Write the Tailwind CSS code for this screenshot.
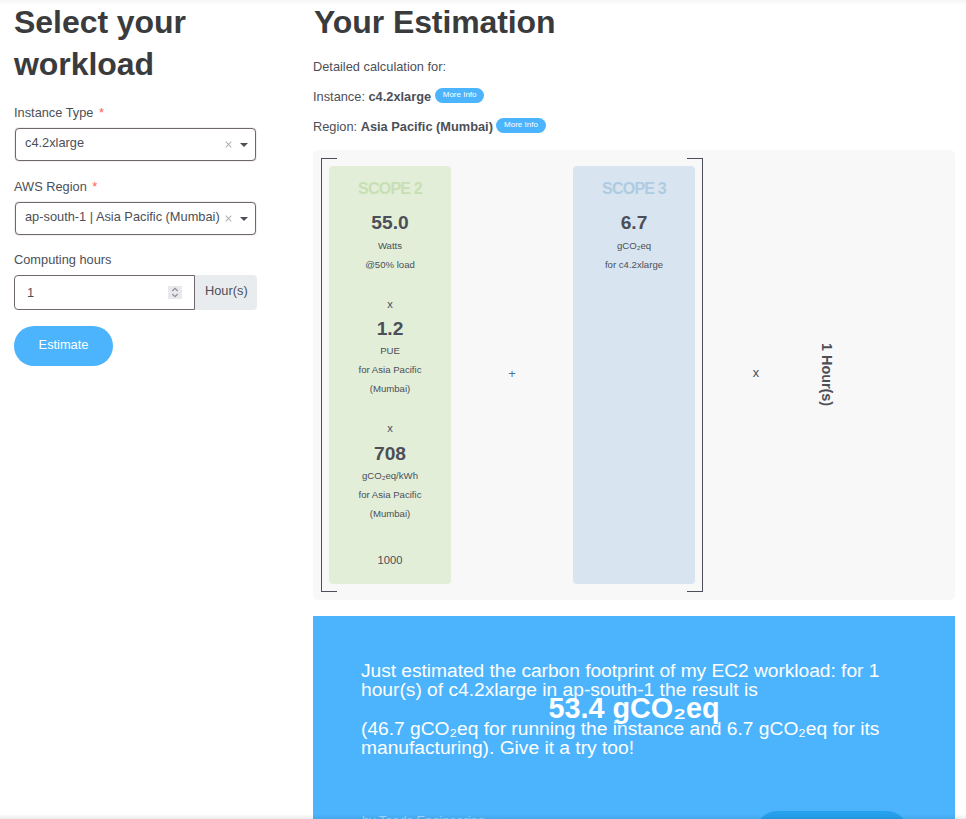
<!DOCTYPE html>
<html lang="en">
<head>
<meta charset="utf-8">
<title>Workload estimation</title>
<script src="https://cdn.jsdelivr.net/npm/@tailwindcss/browser@4"></script>
</head>
<body class="relative h-[819px] overflow-hidden bg-white font-['Liberation_Sans',Arial,sans-serif] text-[12.8px] leading-[20px] text-[#4c4f58]">
<div class="flex h-full">
  <aside class="w-[257px] shrink-0 pl-[14px] pt-px">
    <h1 class="text-[32px] leading-[42px] font-bold tracking-[-0.05px] text-[#3a3b3d]">Select your<br>workload</h1>
    <label class="mt-[18px] block">Instance Type <span class="ml-[2px] text-[#ff5b5b]">*</span></label>
    <div class="mt-[5px] ml-px flex h-[33px] w-[241px] items-center rounded-[4px] border border-[#6f676b] pl-[9px] pr-[7px] shadow-[0_0_1px_#6f676b]">
      <span class="mb-[3px] flex-1">c4.2xlarge</span>
      <svg class="mr-[8px] h-[7px] w-[7px]" viewBox="0 0 7 7" stroke="#b5b5b8" stroke-width="1.1"><path d="M.7.7l5.6 5.6M6.3.7L.7 6.3"/></svg>
      <svg class="h-[4px] w-[8px]" viewBox="0 0 8 4" fill="#4c4f58"><path d="M0 0h8L4 4z"/></svg>
    </div>
    <label class="mt-[16px] block">AWS Region <span class="ml-[2px] text-[#ff5b5b]">*</span></label>
    <div class="mt-[5px] ml-px flex h-[33px] w-[241px] items-center rounded-[4px] border border-[#6f676b] pl-[9px] pr-[7px] shadow-[0_0_1px_#6f676b]">
      <span class="mb-[4px] flex-1 whitespace-nowrap">ap-south-1 | Asia Pacific (Mumbai)</span>
      <svg class="mr-[8px] h-[7px] w-[7px] shrink-0" viewBox="0 0 7 7" stroke="#b5b5b8" stroke-width="1.1"><path d="M.7.7l5.6 5.6M6.3.7L.7 6.3"/></svg>
      <svg class="h-[4px] w-[8px] shrink-0" viewBox="0 0 8 4" fill="#4c4f58"><path d="M0 0h8L4 4z"/></svg>
    </div>
    <label class="mt-[15px] block">Computing hours</label>
    <div class="mt-[5px] flex h-[35px] w-[243px]">
      <div class="flex w-[181px] items-center rounded-l-[4px] border border-[#6f676b] pl-[12px] pr-[12px]">
        <span class="flex-1">1</span>
        <span class="flex h-[13px] w-[14px] items-center justify-center bg-[#e9e9ed]"><svg class="h-[11px] w-[8px]" viewBox="0 0 8 11" fill="none" stroke="#8f8f9d" stroke-width="1.3"><path d="M1.3 4L4 1.3 6.7 4M1.3 7L4 9.7 6.7 7"/></svg></span>
      </div>
      <span class="flex-1 rounded-r-[4px] bg-[#e9ecef] pl-[10px] pt-[6px]">Hour(s)</span>
    </div>
    <button class="mt-[16px] h-[40px] w-[99px] rounded-full bg-[#4cb4fd] pb-[3px] text-white">Estimate</button>
  </aside>

  <main class="ml-[56px] w-[642px] shrink-0 pt-px">
    <h1 class="pl-px text-[32px] leading-[42px] font-bold tracking-[-0.1px] text-[#3a3b3d]">Your Estimation</h1>
    <p class="mt-[14px]">Detailed calculation for:</p>
    <p class="mt-[10px] flex">Instance:&nbsp;<b>c4.2xlarge</b><span class="ml-[4px] mt-[1px] h-[15px] w-[49px] rounded-full bg-[#4cb4fd] text-center text-[8px] leading-[13px] text-white">More Info</span></p>
    <p class="mt-[10px] flex">Region:&nbsp;<b>Asia Pacific (Mumbai)</b><span class="ml-[3px] mt-[1px] h-[15px] w-[50px] rounded-full bg-[#4cb4fd] text-center text-[8px] leading-[13px] text-white">More Info</span></p>

    <section class="mt-[13px] flex h-[450px] rounded-[5px] bg-[#f8f8f8] p-[8px]">
      <div class="w-[16px] shrink-0 -mr-[8px] h-[434px] border-y border-l border-[#4c4f58]"></div>
      <div class="mt-[8px] h-[418px] w-[122px] rounded-[4px] bg-[#e2eed8] pt-[13px] text-center text-[9.6px] leading-[19.2px]">
        <h2 class="text-[16px] leading-[20px] font-bold tracking-[-0.8px] text-[#c8dfb5]">SCOPE 2</h2>
        <div class="mt-[12px] text-[19.2px] leading-[24px] font-bold">55.0</div>
        <div class="mt-[1px]">Watts<br>@50% load</div>
        <div class="mt-[21px] text-[11.2px] leading-[19px]">x</div>
        <div class="mt-[3px] text-[19.2px] leading-[24px] font-bold">1.2</div>
        <div class="-mt-[0.4px]">PUE<br>for Asia Pacific<br>(Mumbai)</div>
        <div class="mt-[20.4px] text-[11.2px] leading-[19px]">x</div>
        <div class="mt-[3.6px] text-[19.2px] leading-[24px] font-bold">708</div>
        <div class="mt-[0.4px]">gCO₂eq/kWh<br>for Asia Pacific<br>(Mumbai)</div>
        <div class="mt-[27px] text-[11.2px] leading-[19px]">1000</div>
      </div>
      <div class="flex w-[122px] items-center justify-center pb-[2px]"><span class="text-[#3f76a8]">+</span></div>
      <div class="mt-[8px] h-[418px] w-[122px] rounded-[4px] bg-[#d8e5f0] pt-[13px] text-center text-[9.6px] leading-[19.2px]">
        <h2 class="text-[16px] leading-[20px] font-bold tracking-[-0.8px] text-[#aecbe2]">SCOPE 3</h2>
        <div class="mt-[12px] text-[19.2px] leading-[24px] font-bold">6.7</div>
        <div class="mt-[1px]">gCO₂eq<br>for c4.2xlarge</div>
      </div>
      <div class="-ml-[8px] h-[434px] w-[16px] border-y border-r border-[#4c4f58]"></div>
      <div class="flex w-[106px] items-center justify-center pb-[4px]">x</div>
      <div class="flex w-[35px] items-center justify-center text-[14.4px] font-bold"><span class="[writing-mode:vertical-rl]">1 Hour(s)</span></div>
    </section>

    <section class="mt-[16px] h-[203px] bg-[#4cb4fd] px-[48px] pt-[45px] text-[19.2px] leading-[19.2px] text-white">
      <p class="whitespace-nowrap"><span class="tracking-[-0.035px]">Just estimated the carbon footprint of my EC2 workload: for 1</span><br>hour(s) of c4.2xlarge in ap-south-1 the result is</p>
      <p class="text-center text-[28.8px] leading-[19.2px] font-bold">53.4 gCO₂eq</p>
      <p class="whitespace-nowrap">(46.7 gCO₂eq for running the instance and 6.7 gCO₂eq for its<br>manufacturing). Give it a try too!</p>
      <div class="mt-[54px] flex justify-between text-[12.8px] leading-[20px]">
        <span class="pl-px text-white/50">by Teads Engineering</span>
        <span class="h-[40px] w-[150px] rounded-full bg-[#26a1ee]"></span>
      </div>
    </section>
  </main>
</div>
<div class="absolute inset-x-0 top-0 h-[5px] bg-gradient-to-b from-black/4 to-transparent"></div>
<div class="absolute inset-x-0 bottom-0 h-[5px] bg-gradient-to-t from-black/8 to-transparent"></div>
</body>
</html>
